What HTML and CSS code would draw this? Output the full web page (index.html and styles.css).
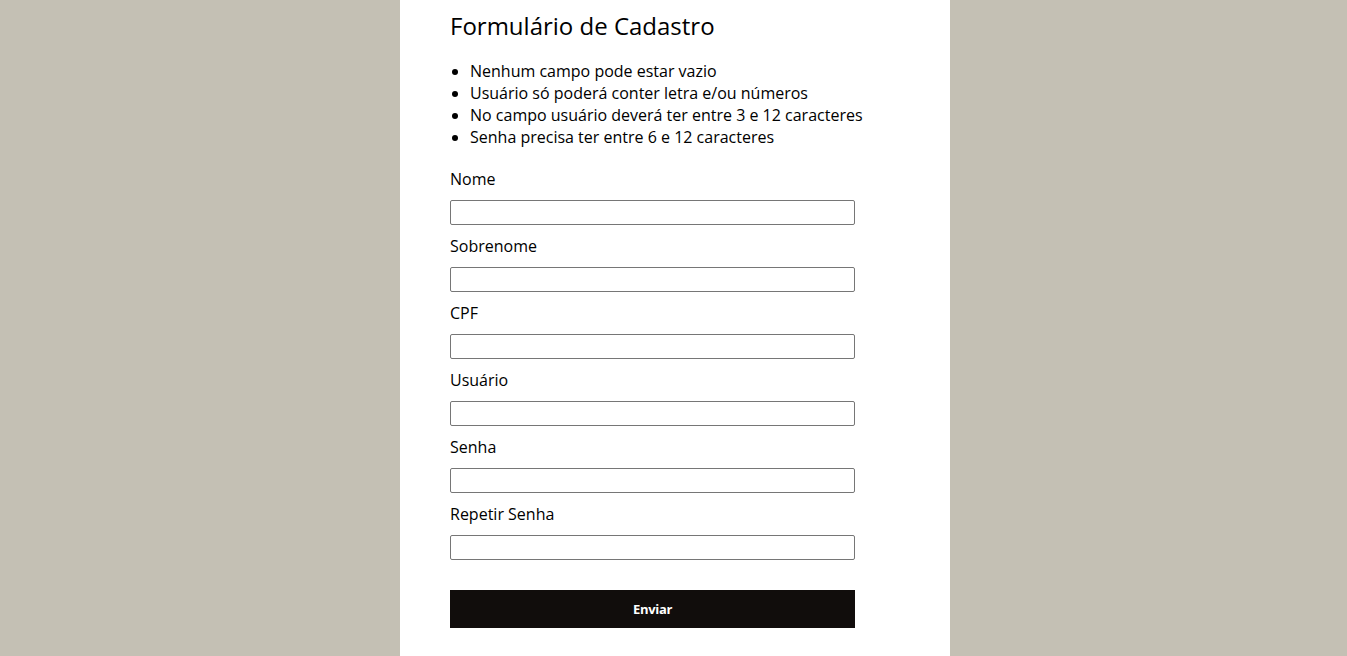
FILE: index.html
```html
<!DOCTYPE html>
<html lang="pt-BR">
<head>
<meta charset="utf-8">
<title>Formulário de Cadastro</title>
<link rel="stylesheet" href="styles.css">
</head>
<body>
<main class="container">
  <h1 class="title">Formulário de Cadastro</h1>
  <ul class="rules">
    <li>Nenhum campo pode estar vazio</li>
    <li>Usuário só poderá conter letra e/ou números</li>
    <li>No campo usuário deverá ter entre 3 e 12 caracteres</li>
    <li>Senha precisa ter entre 6 e 12 caracteres</li>
  </ul>
  <form class="form">
    <label class="label" for="nome">Nome</label>
    <input class="field" id="nome" type="text">
    <label class="label" for="sobrenome">Sobrenome</label>
    <input class="field" id="sobrenome" type="text">
    <label class="label" for="cpf">CPF</label>
    <input class="field" id="cpf" type="text">
    <label class="label" for="usuario">Usuário</label>
    <input class="field" id="usuario" type="text">
    <label class="label" for="senha">Senha</label>
    <input class="field" id="senha" type="password">
    <label class="label" for="senha2">Repetir Senha</label>
    <input class="field" id="senha2" type="password">
    <button class="submit" type="button">Enviar</button>
  </form>
</main>
</body>
</html>
```
FILE: styles.css
```css
html, body {
  margin: 0;
  padding: 0;
  height: 100%;
}
body {
  box-sizing: border-box;
  display: flex;
  justify-content: center;
  padding-left: 3px;
  background: #c4c0b4;
  font-family: "Open Sans", "Liberation Sans", sans-serif;
  color: #000;
}
.container {
  box-sizing: border-box;
  width: 550px;
  flex: 0 0 550px;
  min-height: 100%;
  background: #fff;
  padding: 9px 50px 20px;
}
.title {
  font-size: 24px;
  font-weight: 500;
  line-height: 33px;
  margin: 0 0 18px;
}
.rules {
  margin: 0 0 20px;
  padding-left: 20px;
  font-size: 16px;
  line-height: 22px;
}
.form {
  display: flex;
  flex-direction: column;
  width: 405px;
}
.label {
  font-size: 16px;
  line-height: 22px;
  margin-bottom: 10px;
}
.field {
  box-sizing: border-box;
  height: 25px;
  width: 405px;
  margin: 0 0 10px;
  border: 1px solid #767676;
  border-radius: 2px;
  padding: 1px 2px;
  font-family: inherit;
  background: #fff;
}
.submit {
  margin-top: 20px;
  height: 38px;
  width: 405px;
  border: none;
  background: #110d0c;
  color: #fff;
  font-family: inherit;
  font-weight: 700;
  font-size: 13px;
  letter-spacing: -0.3px;
  cursor: pointer;
}
```
